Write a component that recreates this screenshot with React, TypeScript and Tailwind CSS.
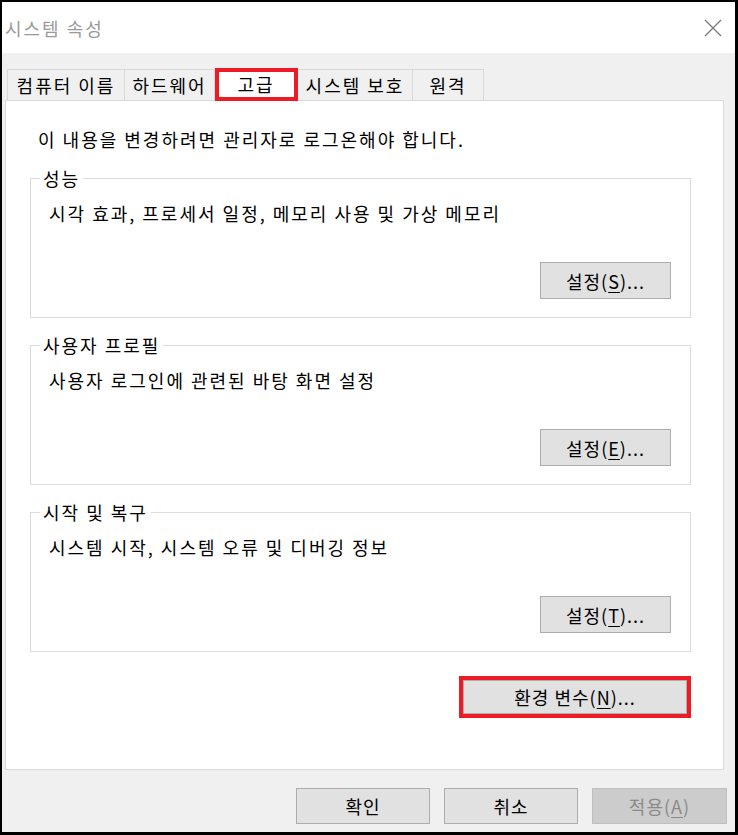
import React from "react";

const font = "font-['Malgun_Gothic','Noto_Sans_CJK_KR',sans-serif]";

function Btn({ label, mn, after = "", w = "w-[131px]", h = "h-[37px]", disabled = false }: { label: string; mn: string; after?: string; w?: string; h?: string; disabled?: boolean }) {
  return (
    <div
      className={`${w} ${h} flex items-center justify-center border text-[18px] leading-none tracking-[1px] ${
        disabled ? "bg-[#cccccc] border-[#bfbfbf] text-[#8a8a8a]" : "bg-[#e1e1e1] border-[#adadad] text-black"
      }`}
    >
      <span>
        {label}
        {mn ? (
          <>
            (<span className="underline underline-offset-[3px]">{mn}</span>)
          </>
        ) : null}
        {after}
      </span>
    </div>
  );
}

function Group({ title, desc, mn }: { title: string; desc: string; mn: string }) {
  return (
    <fieldset className="ml-[24px] w-[661px] border border-[#dcdcdc] px-[9px] pt-[11px] pb-[18px] mt-[15px] first:mt-[16px]">
      <legend className="px-[3px] h-[24px] leading-[24px] text-[18px] tracking-[2px] text-black">{title}</legend>
      <div className="pl-[9px] pr-[10px]">
        <div className="h-[24px] leading-[24px] text-[18px] tracking-[2px] text-black">{desc}</div>
        <div className="mt-[37px] flex justify-end">
          <Btn label="설정" mn={mn} after="..." />
        </div>
      </div>
    </fieldset>
  );
}

export default function App() {
  const tabs = ["컴퓨터 이름", "하드웨어", "고급", "시스템 보호", "원격"];
  const widths = ["w-[117px]", "w-[90px]", "w-[83px]", "w-[115px]", "w-[72px]"];
  return (
    <div
      className={`w-[738px] h-[835px] bg-[#f0f0f0] border-black border-t-2 border-l-2 border-r-[3px] border-b-[3px] flex flex-col ${font}`}
    >
      {/* title bar */}
      <div className="h-[51px] bg-white flex items-center justify-between pl-[3px] pr-[13px] shrink-0">
        <span className="text-[18px] tracking-[2px] text-[#9a9a9a] leading-none">시스템 속성</span>
        <svg width="18" height="18" viewBox="0 0 18 18">
          <path d="M1 1 L17 17 M17 1 L1 17" stroke="#7a7a7a" strokeWidth="1.3" fill="none" />
        </svg>
      </div>

      <div className="flex flex-col pl-[3px] pt-[16px]">
        {/* tabs */}
        <div className="flex items-end h-[31px] pl-[2px]">
          {tabs.map((t, i) => {
            const sel = i === 2;
            return (
              <div
                key={t}
                className={`${widths[i]} relative flex items-center justify-center text-[18px] tracking-[2px] text-black border-t border-l border-[#d9d9d9] ${
                  i === tabs.length - 1 ? "border-r" : ""
                } ${sel ? "h-[33px] bg-white -mb-px z-10 pb-[2px]" : "h-[31px] bg-[#f0f0f0]"}`}
              >
                {t}
                {sel && (
                  <div className="absolute left-0 -top-px w-[83px] h-[33px] border-4 border-[#ed1c24]" />
                )}
              </div>
            );
          })}
        </div>

        {/* panel */}
        <div className="w-[719px] h-[670px] bg-white border border-[#d9d9d9] flex flex-col">
          <div className="pl-[32px] pt-[26px] h-[50px] leading-[24px] text-[18px] tracking-[2px] text-black">
            이 내용을 변경하려면 관리자로 로그온해야 합니다.
          </div>
          <Group title="성능" desc="시각 효과, 프로세서 일정, 메모리 사용 및 가상 메모리" mn="S" />
          <Group title="사용자 프로필" desc="사용자 로그인에 관련된 바탕 화면 설정" mn="E" />
          <Group title="시작 및 복구" desc="시스템 시작, 시스템 오류 및 디버깅 정보" mn="T" />
          <div className="mt-[24px] flex justify-end pr-[32px]">
            <div className="border-4 border-[#ed1c24]">
              <Btn label="환경 변수" mn="N" after="..." w="w-[224px]" h="h-[34px]" />
            </div>
          </div>
        </div>
      </div>

      {/* bottom buttons */}
      <div className="flex justify-end gap-[14px] pt-[18px] pr-[8px]">
        <Btn label="확인" mn="" w="w-[134px]" h="h-[36px]" />
        <Btn label="취소" mn="" w="w-[134px]" h="h-[36px]" />
        <Btn label="적용" mn="A" w="w-[135px]" h="h-[36px]" disabled />
      </div>
    </div>
  );
}
